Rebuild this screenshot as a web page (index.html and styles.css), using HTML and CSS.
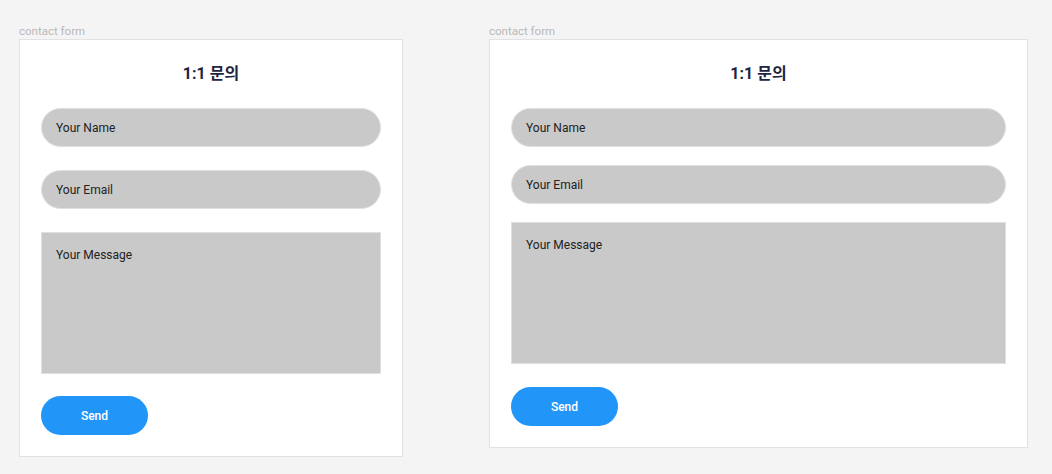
FILE: index.html
```html
<!DOCTYPE html>
<html lang="ko">
<head>
    <meta charset="UTF-8">
    <title>contact form</title>
    <meta name="viewport" content="width=device-width, initial-scale=1.0">
    <link rel="stylesheet" href="styles.css">
</head>
<body>
    <div class="board">
        <div class="frame">
            <div class="frame-label">contact form</div>
            <form class="contact narrow">
                <h2>1:1 문의</h2>
                <input type="text" placeholder="Your Name">
                <input type="email" placeholder="Your Email">
                <textarea placeholder="Your Message"></textarea>
                <button type="button">Send</button>
            </form>
        </div>

        <div class="frame">
            <div class="frame-label">contact form</div>
            <form class="contact wide">
                <h2>1:1 문의</h2>
                <input type="text" placeholder="Your Name">
                <input type="email" placeholder="Your Email">
                <textarea placeholder="Your Message"></textarea>
                <button type="button">Send</button>
            </form>
        </div>
    </div>
</body>
</html>
```

FILE: styles.css
```css
body {
    margin: 0;
    background-color: #f4f4f4;
    font-family: Roboto, "Noto Sans CJK KR", sans-serif;
}
.board {
    display: flex;
    align-items: flex-start;
    gap: 86px;
    padding: 24px 0 0 19px;
}
.frame-label {
    font-size: 11.5px;
    line-height: 15px;
    color: #b8b8b8;
}
.contact {
    display: flex;
    flex-direction: column;
    align-items: flex-start;
    background: white;
    border: 1px solid #e2e2e2;
    padding: 22px 21px 21px 21px;
}
.contact.narrow {
    width: 340px;
    gap: 23px;
}
.contact.wide {
    width: 495px;
    gap: 18px;
}
.contact h2 {
    align-self: stretch;
    margin: 0 0 -1px 0;
    text-align: center;
    font-size: 16px;
    line-height: 24px;
    font-weight: 700;
    color: #1e2540;
}
.contact.wide h2 {
    margin-bottom: 4px;
}
input, textarea {
    box-sizing: border-box;
    width: 100%;
    margin: 0;
    background-color: #c9c9c9;
    border: 1px solid #e0e0e0;
    font-family: Roboto, sans-serif;
    font-size: 12px;
    color: #222;
    outline: none;
}
input {
    height: 39px;
    padding: 0 14px;
    border-radius: 20px;
}
textarea {
    height: 142px;
    padding: 15px 14px;
    resize: none;
}
input::placeholder, textarea::placeholder {
    color: #222;
}
.contact.wide textarea {
    margin-bottom: 5px;
}
button {
    width: 107px;
    height: 39px;
    background-color: #2196f8;
    color: white;
    border: none;
    border-radius: 20px;
    font-family: Roboto, sans-serif;
    font-size: 12px;
    font-weight: 500;
    cursor: pointer;
}
.contact.narrow button {
    margin-top: -1px;
}
```
